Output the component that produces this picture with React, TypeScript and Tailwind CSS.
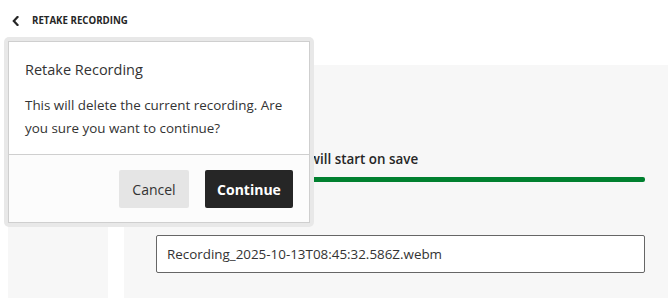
export default function App() {
  return (
    <div className="relative h-[298px] w-[668px] overflow-hidden bg-white font-['Open_Sans',sans-serif] text-[#262626]">
      <header className="flex h-[41px] items-center gap-[13px] pl-[12px] pt-[1px]">
        <svg width="7" height="10" viewBox="0 0 7 10" fill="none">
          <path d="M5.5 1 L1.8 5 L5.5 9" stroke="#262626" strokeWidth="2.2" strokeLinecap="square" />
        </svg>
        <span className="text-[9.7px] font-bold">RETAKE RECORDING</span>
      </header>

      <div className="flex h-[257px] gap-[16px] pl-[8px]">
        <aside className="mt-[24px] w-[100px] bg-[#f7f7f7]" />
        <main className="mt-[24px] flex-1 bg-[#f7f7f7] pl-[32px] pr-[23px] pt-[84px]">
          <p className="-ml-[5px] text-[13.4px] font-semibold leading-[20px]">Automatic transcription will start on save</p>
          <div className="mt-[8px] h-[5px] rounded-r-[2px] bg-[#00802f]" />
          <div className="mt-[53px] flex h-[38px] items-center rounded-[2px] border border-[#666] bg-white px-[10px] text-[13.4px] text-[#333]">
            Recording_2025-10-13T08:45:32.586Z.webm
          </div>
        </main>
      </div>

      <div className="absolute left-[4px] top-[37px] w-[310px] rounded-[5px] bg-[#e8e8e8] p-[4px]">
        <div className="border border-[#cfcfcf] bg-white">
          <div className="px-[16px] pb-[14px] pt-[17px]">
            <h2 className="text-[14.5px] font-medium leading-[22px] text-[#333]">Retake Recording</h2>
            <p className="mt-[13px] text-[13.4px] leading-[23px] text-[#333]">
              This will delete the current recording. Are you sure you want to continue?
            </p>
          </div>
          <div className="flex justify-end gap-[16px] border-t border-[#cfcfcf] bg-[#fcfcfc] px-[16px] pb-[14px] pt-[15px]">
            <button className="h-[38px] w-[70px] rounded-[2px] bg-[#e5e5e5] text-[14px] text-[#333]">Cancel</button>
            <button className="h-[38px] w-[88px] rounded-[2px] bg-[#262626] text-[14px] font-bold text-white">Continue</button>
          </div>
        </div>
      </div>
    </div>
  );
}
